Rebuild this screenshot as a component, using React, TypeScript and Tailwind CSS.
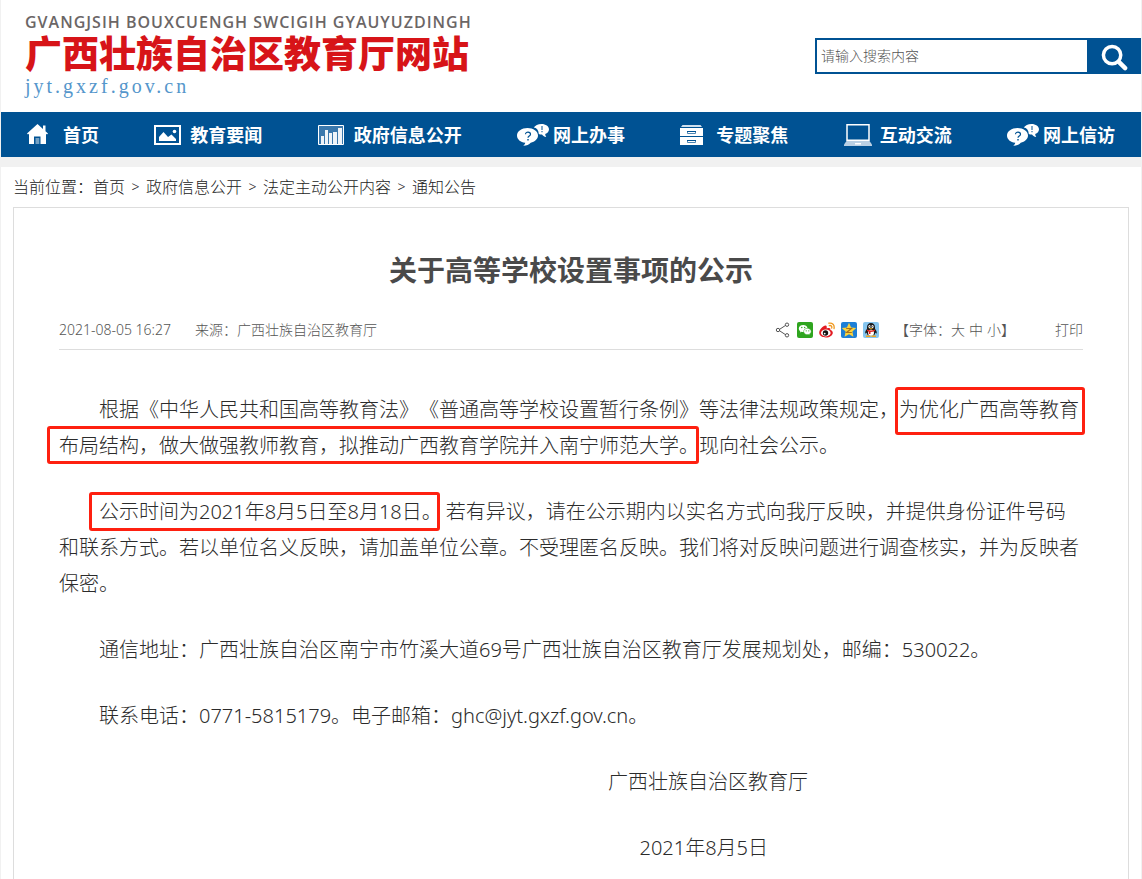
import React from 'react';

type IconProps = { className?: string };

function HomeIcon({ className }: IconProps) {
  return (
    <svg width="21" height="21" viewBox="0 0 21 21" fill="#fff" className={className} aria-hidden="true">
      <path d="M10.500 0 0 9.600l1 1L2 9.800V20h5v-7.500h6.500V20H19V9.800l1 .8 1-1-2.500-2.300V1.500H16v3.400z" />
      <path d="M8.500 14h3.800v6H8.500z" opacity=".45" />
    </svg>
  );
}

function PictureIcon({ className }: IconProps) {
  return (
    <svg width="27" height="20" viewBox="0 0 27 20" className={className} aria-hidden="true">
      <path d="M1 1h25v18H1z" fill="none" stroke="#fff" strokeWidth="2" />
      <path d="M5 16v-4l4.500-5 4.500 5 3.500-2.500L22 14v2z" fill="#fff" />
      <circle cx="20.500" cy="6.500" r="1.800" fill="#fff" />
    </svg>
  );
}

function ChartIcon({ className }: IconProps) {
  return (
    <svg width="26" height="20" viewBox="0 0 26 20" className={className} aria-hidden="true">
      <path d="M.5.5h25v19H.5z" fill="#3a78ad" stroke="#fff" />
      <path d="M3 11h3v8H3zM7 5h3v14H7zM11 8h3v11h-3zM15 7h4v12h-4zM20 3h4v16h-4z" fill="#fff" opacity=".92" />
    </svg>
  );
}

function BubblesIcon({ className }: IconProps) {
  return (
    <svg width="32" height="22" viewBox="0 0 32 22" className={className} aria-hidden="true">
      <path
        d="M24.500 0c4.200 0 7.500 2.300 7.500 5.300 0 2.200-1.500 3.900-3.800 4.800 0 1.200.4 2 1 3-2-.4-3.600-1.400-4.200-2.600-1.600 0-2.400-.2-3.200-.6C21.500 6 19.500 4 16.800 3.600 18 1.500 21 0 24.500 0z"
        fill="#fff"
      />
      <path
        d="M10.500 4C16.300 4 21 7.200 21 11.500c0 3.600-3.200 6.300-7.300 7.200-1.600 1.900-4 3-7.500 3.100 1.300-1 2-1.900 2-3C3.500 18.300 0 15.300 0 11.500 0 7.200 4.700 4 10.500 4z"
        fill="#fff"
      />
      <path d="M8.500 10.200c0-2.800 5-2.700 5 0 0 1.800-2.500 1.800-2.500 3.500" fill="none" stroke="#005293" strokeWidth="1.200" />
      <path d="M10.300 15h1.400v1.500h-1.400z" fill="#005293" />
      <path d="M24.500 2h1v4h-1zM24.500 7h1v1.200h-1z" fill="#005293" />
    </svg>
  );
}

function DrawersIcon({ className }: IconProps) {
  return (
    <svg width="23" height="20" viewBox="0 0 23 20" className={className} aria-hidden="true">
      <path d="M2.500 0h18L22 2H1z" fill="#cfe0ee" />
      <path d="M0 3h23v8H0zM0 12h23v8H0z" fill="#fff" />
      <path d="M7.500 6.500h8v2h-8zM7.500 15.500h8v2h-8z" fill="none" stroke="#4d86b4" />
      <path d="M7 6.500h9M7 15.500h9" stroke="#005293" />
    </svg>
  );
}

function LaptopIcon({ className }: IconProps) {
  return (
    <svg width="28" height="22" viewBox="0 0 28 22" className={className} aria-hidden="true">
      <path d="M3 .8h22v15.500H3z" fill="none" stroke="#fff" strokeWidth="1.500" />
      <path d="M2.500 17h23l2.500 3.500V22H0v-1.500z" fill="#b9d0e4" />
      <path d="M11 19h6v1.500h-6z" fill="#fff" />
    </svg>
  );
}

function SearchIcon() {
  return (
    <svg width="27" height="27" viewBox="0 0 28 28" fill="none" stroke="#fff" strokeLinecap="round" aria-hidden="true">
      <circle cx="11.500" cy="11.500" r="9" strokeWidth="3.600" />
      <path d="m18.500 18.500 6.500 6.500" strokeWidth="4.600" />
    </svg>
  );
}

function ShareIcon() {
  return (
    <svg width="16" height="16" viewBox="0 0 16 16" fill="none" stroke="#555" aria-hidden="true">
      <path d="m4.600 7.300 5.800-3.800M4.600 8.800l5.800 3.800" />
      <circle cx="3" cy="8" r="1.700" />
      <circle cx="12" cy="2.700" r="1.700" />
      <circle cx="12" cy="13.300" r="1.700" />
    </svg>
  );
}

function WechatIcon() {
  return (
    <svg width="16" height="16" viewBox="0 0 16 16" aria-hidden="true">
      <rect width="16" height="16" rx="2" fill="#2fa51f" />
      <path d="M6.200 3C3.600 3 1.800 4.600 1.800 6.500c0 1.100.6 2 1.500 2.700L3 10.500l1.500-.8c2.800.8 6-.7 6-3.300C10.500 4.500 8.700 3 6.200 3z" fill="#fff" />
      <path d="M10.500 6.300c-2.200 0-3.900 1.400-3.900 3.200 0 2.200 2.600 3.600 4.900 3l1.300.8-.3-1.200c.9-.6 1.700-1.500 1.700-2.600 0-1.800-1.700-3.200-3.700-3.200z" fill="#fff" stroke="#2fa51f" strokeWidth=".5" />
      <g fill="#2fa51f">
        <circle cx="4.800" cy="5.500" r=".7" />
        <circle cx="7.700" cy="5.500" r=".7" />
        <circle cx="9.200" cy="8.800" r=".6" />
        <circle cx="11.800" cy="8.800" r=".6" />
      </g>
    </svg>
  );
}

function WeiboIcon() {
  return (
    <svg width="16" height="16" viewBox="0 0 16 16" fill="none" aria-hidden="true">
      <path d="M6.500 3.500C4.500 3.300.2 7.500.2 10.800c0 3 3.300 4.700 6.600 4.700 4 0 7-2.200 7-4.800 0-1.500-1.200-2.400-2.500-2.700.5-1.500-.4-2.700-3.700-1.500.4-1.400.3-2.900-1.100-3z" fill="#e21b22" />
      <ellipse cx="6.800" cy="10.900" rx="4.800" ry="3.500" fill="#fff" />
      <circle cx="6.500" cy="11" r="2.700" fill="#111" />
      <circle cx="5.700" cy="11.600" r=".9" fill="#fff" />
      <path d="M9.800 1.200c3.600-.8 6 2 5.200 5.300M10.300 3.600c1.800-.4 2.900.8 2.400 2.500" stroke="#f0981e" strokeWidth="1.300" strokeLinecap="round" />
    </svg>
  );
}

function QzoneIcon() {
  return (
    <svg width="16" height="16" viewBox="0 0 16 16" aria-hidden="true">
      <rect width="16" height="16" rx="2" fill="#1d7fd6" />
      <path d="m8 .8 2.100 4.700 5.100.6-3.800 3.500 1 5.200L8 12.200l-4.400 2.600 1-5.200L.8 6.100l5.100-.6z" fill="#fcd33b" />
      <path d="M5.200 6.500h5.200l-4.800 4h5.200" fill="none" stroke="#a8701a" strokeWidth="1.200" />
    </svg>
  );
}

function QqIcon() {
  return (
    <svg width="16" height="16" viewBox="0 0 16 16" aria-hidden="true">
      <rect width="16" height="16" rx="2" fill="#86c5ee" />
      <path d="M8 1C5.500 1 4 2.800 4 5.300v1.500C2.800 8.300 1.900 9.900 2.300 11.500c.5.100 1-.4 1.400-1 .1 1.200.5 2 1.200 2.700h6.200c.7-.7 1.100-1.500 1.200-2.700.4.600.9 1.100 1.400 1 .4-1.600-.5-3.200-1.700-4.700V5.300C12 2.800 10.500 1 8 1z" fill="#1b1b1b" />
      <ellipse cx="8" cy="10.800" rx="3" ry="3" fill="#fff" />
      <ellipse cx="6.500" cy="4.500" rx="1.100" ry="1.500" fill="#fff" />
      <ellipse cx="9.500" cy="4.500" rx="1.100" ry="1.500" fill="#fff" />
      <circle cx="6.900" cy="4.600" r=".5" />
      <circle cx="9.100" cy="4.600" r=".5" />
      <path d="M5.500 6.300h5L8 7.400z" fill="#f7b21b" />
      <path d="M4 7.500c2.500 1.400 5.500 1.400 8 0v1.600c-1.600.7-3 1-4.500 1v1.800H5.800V9.800L4 9z" fill="#e0211d" />
      <path d="M3 13.500h4.500V15H3zM8.500 13.500H13V15H8.500z" fill="#f2a51c" />
    </svg>
  );
}

const navItems = [
  { label: '首页', Icon: HomeIcon },
  { label: '教育要闻', Icon: PictureIcon },
  { label: '政府信息公开', Icon: ChartIcon },
  { label: '网上办事', Icon: BubblesIcon },
  { label: '专题聚焦', Icon: DrawersIcon },
  { label: '互动交流', Icon: LaptopIcon },
  { label: '网上信访', Icon: BubblesIcon },
];

const crumbs = ['首页', '政府信息公开', '法定主动公开内容', '通知公告'];

const shareItems = [
  { label: '分享', Icon: ShareIcon },
  { label: '微信', Icon: WechatIcon },
  { label: '新浪微博', Icon: WeiboIcon },
  { label: 'QQ空间', Icon: QzoneIcon },
  { label: 'QQ好友', Icon: QqIcon },
];

// Sentence with a red frame drawn over it
function Marked({ frame, children }: { frame: string; children: React.ReactNode }) {
  return (
    <span className="relative inline-block indent-0">
      {children}
      <span className={`pointer-events-none absolute rounded-[3px] border-3 border-[#fe2010] ${frame}`} />
    </span>
  );
}

function Header() {
  return (
    <header className="flex h-28 items-start justify-between bg-white pl-6">
      <a href="#" className="block pt-3">
        <span className="block font-['Open_Sans',sans-serif] text-base leading-5 font-semibold tracking-[1px] text-[#6b6666]">
          GVANGJSIH BOUXCUENGH SWCIGIH GYAUYUZDINGH
        </span>
        <span className="block text-[37px] leading-11 font-black text-[#d71418]">广西壮族自治区教育厅网站</span>
        <span className="block font-['Liberation_Serif',serif] text-xl leading-5 tracking-[3px] text-[#5596cb]">
          jyt.gxzf.gov.cn
        </span>
      </a>
      <form className="mt-[38px] flex h-9" onSubmit={(e) => e.preventDefault()}>
        <input
          type="text"
          aria-label="搜索"
          placeholder="请输入搜索内容"
          className="w-[272px] border-2 border-r-0 border-[#005293] bg-white px-1 text-sm text-[#333] outline-none placeholder:text-[#555]"
        />
        <button type="submit" aria-label="搜索" className="flex w-[54px] items-center justify-center bg-[#005293] pt-0.5">
          <SearchIcon />
        </button>
      </form>
    </header>
  );
}

function Nav() {
  return (
    <nav className="flex h-[45px] items-center justify-between bg-[#005293] px-[26px]">
      {navItems.map(({ label, Icon }) => (
        <a key={label} href="#" className="flex items-center text-lg font-bold text-white">
          <span className="w-9">
            <Icon className="block" />
          </span>
          {label}
        </a>
      ))}
    </nav>
  );
}

function Breadcrumb() {
  return (
    <div className="flex h-10 items-center text-base text-[#222]">
      <span>当前位置：</span>
      {crumbs.map((c, i) => (
        <React.Fragment key={c}>
          {i > 0 && <span className="w-[21px] text-center text-sm">&gt;</span>}
          <a href="#">{c}</a>
        </React.Fragment>
      ))}
    </div>
  );
}

function MetaBar() {
  return (
    <div className="flex h-10 items-center border-b border-[#ddd] text-sm text-[#555]">
      <span>2021-08-05 16:27</span>
      <span className="ml-6">来源：广西壮族自治区教育厅</span>
      <div className="ml-auto flex items-center gap-1.5">
        {shareItems.map(({ label, Icon }) => (
          <button key={label} type="button" aria-label={label}>
            <Icon />
          </button>
        ))}
      </div>
      <div className="ml-4 flex">
        <span>【字体：</span>
        <div className="flex gap-1">
          <button type="button">大</button>
          <button type="button">中</button>
          <button type="button">小</button>
        </div>
        <span>】</span>
      </div>
      <button type="button" className="ml-10">打印</button>
    </div>
  );
}

export default function App() {
  return (
    <div className="min-h-screen bg-[#f1f1f1] px-px font-['Noto_Sans','Noto_Sans_CJK_SC',sans-serif] font-light [text-spacing-trim:space-all]">
      <Header />
      <Nav />
      <main className="mt-2.5 bg-white px-3">
        <Breadcrumb />
        <article className="border border-b-0 border-[#ddd] px-[45px] pt-10">
          <h1 className="text-center text-[28px] leading-11 font-bold text-[#4a4a4a]">关于高等学校设置事项的公示</h1>
          <div className="mt-[18px]">
            <MetaBar />
          </div>
          <div className="space-y-[30px] pt-[42px] pb-4 text-xl leading-9 text-[#2b2b2b]">
            <p className="indent-10">
              根据《中华人民共和国高等教育法》《普通高等学校设置暂行条例》等法律法规政策规定，
              <Marked frame="-top-[5px] -right-1.5 -bottom-[7px] -left-1">为优化广西高等教育</Marked>
              <Marked frame="-top-0.5 right-0 bottom-0 -left-3">布局结构，做大做强教师教育，拟推动广西教育学院并入南宁师范大学。</Marked>
              现向社会公示。
            </p>
            <p className="indent-10">
              <span className="mr-1">
                <Marked frame="-top-0.5 right-0.5 -bottom-px -left-2.5">公示时间为2021年8月5日至8月18日。</Marked>
              </span>
              若有异议，请在公示期内以实名方式向我厅反映，并提供身份证件号码和联系方式。若以单位名义反映，请加盖单位公章。不受理匿名反映。我们将对反映问题进行调查核实，并为反映者保密。
            </p>
            <p className="indent-10">
              通信地址：广西壮族自治区南宁市竹溪大道69号广西壮族自治区教育厅发展规划处，邮编：530022。
            </p>
            <p className="indent-10">联系电话：0771-5815179。电子邮箱：ghc@jyt.gxzf.gov.cn。</p>
            <p className="pr-[275px] text-right">广西壮族自治区教育厅</p>
            <p className="pr-[315px] text-right">2021年8月5日</p>
          </div>
        </article>
      </main>
    </div>
  );
}
